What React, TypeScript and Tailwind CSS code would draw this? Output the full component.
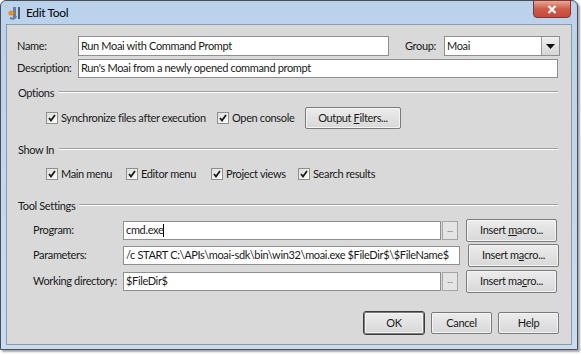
import React from "react";

const font = { fontFamily: 'Lato, "Liberation Sans", sans-serif' };

function Check() {
  return (
    <span className="w-[12px] h-[12px] border border-[#8e8f8f] bg-gradient-to-br from-[#dcdcdc] to-[#ffffff] flex items-center justify-center shrink-0">
      <svg width="8" height="8" viewBox="0 0 8 8">
        <path d="M1 4 L3 6.5 L7 1" stroke="#1a1a1a" strokeWidth="1.8" fill="none" />
      </svg>
    </span>
  );
}

function CheckItem({ label, w }: { label: string; w: string }) {
  return (
    <div className={`flex items-center gap-[3px] ${w}`}>
      <Check />
      <span>{label}</span>
    </div>
  );
}

function Btn({ children, w, h = "h-[22px]" }: { children: React.ReactNode; w: string; h?: string }) {
  return (
    <div
      className={`${w} ${h} border border-[#7b7b7b] rounded-[2px] bg-gradient-to-b from-[#ececec] to-[#d8d8d8] shadow-[inset_0_0_0_1px_#f4f4f4] flex items-center justify-center text-[#1a1a1a]`}
    >
      {children}
    </div>
  );
}

function Heading({ label, lineStart }: { label: string; lineStart: string }) {
  return (
    <div className="flex items-center h-[16px] pl-[11px] pr-[13px]">
      <span className={`${lineStart} shrink-0`}>{label}</span>
      <div className="flex-1 h-[2px] border-t border-[#a0a0a0] border-b border-b-white mt-[-2px]" />
    </div>
  );
}

function Dots() {
  return (
    <div className="w-[16px] h-[19px] border border-[#a5a5a5] bg-[#e4e4e4] flex items-center justify-center text-[8px] text-[#555] ml-[1px] leading-none pb-[3px] tracking-normal">
      ...
    </div>
  );
}

export default function App() {
  return (
    <div className="w-[581px] h-[355px] bg-white relative overflow-hidden text-[11px] tracking-[-0.35px] text-[#1a1a1a] whitespace-nowrap" style={font}>
      <div className="w-[578px] h-[350px] border border-[#4b4f55] rounded-t-[6px] bg-gradient-to-b from-[#bad2ec] to-[#c9dcf1] flex flex-col shadow-[2px_2px_2px_rgba(0,0,0,0.35)]">
        {/* title bar */}
        <div className="h-[23px] flex items-center relative shrink-0">
          <svg width="16" height="16" viewBox="0 0 16 16" className="ml-[5px]">
            <rect x="7" y="2" width="3" height="11" fill="#6b7f99" />
            <path d="M4 13 Q9 15 10 11" stroke="#6b7f99" strokeWidth="2" fill="none" />
            <rect x="12" y="2" width="2" height="12" fill="#4b5d78" />
            <circle cx="5" cy="8" r="2.6" fill="#f28c1a" />
          </svg>
          <span className="ml-[4px] text-[12px] text-black">Edit Tool</span>
          <div className="absolute right-[6px] top-[-1px] w-[38px] h-[18px] rounded-b-[4px] border border-[#7a3a33] bg-gradient-to-b from-[#e8a797] via-[#cf5b48] to-[#c9473a] flex items-center justify-center">
            <svg width="10" height="9" viewBox="0 0 10 9">
              <path d="M1.5 1 L8.5 8 M8.5 1 L1.5 8" stroke="white" strokeWidth="2.2" />
            </svg>
          </div>
        </div>
        {/* content */}
        <div className="mx-[5px] h-[321px] border border-[#8b99a8] bg-[#d9d9d9] flex flex-col shrink-0">
          {/* name row */}
          <div className="flex items-center h-[20px] mt-[11px] pl-[10px]">
            <span className="w-[61px]">Name:</span>
            <div className="w-[311px] h-[20px] border border-[#8f8f8f] bg-white flex items-center pl-[2px]">Run Moai with Command Prompt</div>
            <span className="ml-[16px] w-[39px]">Group:</span>
            <div className="flex h-[20px] border border-[#8f8f8f] bg-white">
              <div className="w-[96px] flex items-center pl-[2px]">Moai</div>
              <div className="w-[18px] border-l border-[#9a9a9a] bg-gradient-to-b from-[#f0f0f0] to-[#d6d6d6] flex items-center justify-center">
                <svg width="9" height="5" viewBox="0 0 9 5"><path d="M0 0 H9 L4.5 5 Z" fill="#111" /></svg>
              </div>
            </div>
          </div>
          {/* description */}
          <div className="flex items-center h-[19px] mt-[3px] pl-[10px]">
            <span className="w-[61px]">Description:</span>
            <div className="w-[480px] h-[19px] border border-[#8f8f8f] bg-white flex items-center pl-[2px]">Run's Moai from a newly opened command prompt</div>
          </div>
          {/* options */}
          <div className="mt-[7px]"><Heading label="Options" lineStart="w-[41px]" /></div>
          <div className="flex items-center h-[22px] mt-[6px] pl-[39px]">
            <CheckItem label="Synchronize files after execution" w="w-[171px]" />
            <CheckItem label="Open console" w="w-[88px]" />
            <Btn w="w-[96px]">
              <span>Output <span className="underline">F</span>ilters...</span>
            </Btn>
          </div>
          {/* show in */}
          <div className="mt-[13px]"><Heading label="Show In" lineStart="w-[41px]" /></div>
          <div className="flex items-center h-[16px] mt-[8px] pl-[39px]">
            <CheckItem label="Main menu" w="w-[80px]" />
            <CheckItem label="Editor menu" w="w-[85px]" />
            <CheckItem label="Project views" w="w-[87px]" />
            <CheckItem label="Search results" w="w-[100px]" />
          </div>
          {/* tool settings */}
          <div className="mt-[16px]"><Heading label="Tool Settings" lineStart="w-[61px]" /></div>
          {[
            { label: "Program:", value: "cmd.exe", dots: true, m: "mt-[5px]", mac: <>Insert <span className="underline">m</span>acro...</>, cursor: true },
            { label: "Parameters:", value: "/c START C:\\APIs\\moai-sdk\\bin\\win32\\moai.exe $FileDir$\\$FileName$", dots: false, m: "mt-[3px]", mac: <>Insert m<span className="underline">a</span>cro...</>, cursor: false },
            { label: "Working directory:", value: "$FileDir$", dots: true, m: "mt-[4px]", mac: <>Insert ma<span className="underline">c</span>ro...</>, cursor: false },
          ].map((r) => (
            <div key={r.label} className={`flex items-center h-[22px] ${r.m} pl-[26px]`}>
              <span className="w-[90px]">{r.label}</span>
              {r.dots ? (
                <>
                  <div className="w-[318px] h-[19px] border border-[#8f8f8f] bg-white flex items-center pl-[2px]">
                    {r.value}
                    {r.cursor && <span className="inline-block w-[1px] h-[13px] bg-black" />}
                  </div>
                  <Dots />
                </>
              ) : (
                <div className="w-[337px] h-[19px] border border-[#8f8f8f] bg-white flex items-center pl-[2px] overflow-hidden">{r.value}</div>
              )}
              <div className="ml-[8px]">
                <Btn w="w-[91px]" h="h-[23px]"><span>{r.mac}</span></Btn>
              </div>
            </div>
          ))}
          {/* bottom buttons */}
          <div className="flex justify-end gap-[6px] mt-[19px] pr-[12px]">
            <div className="border border-[#3c3c3c] rounded-[3px]"><Btn w="w-[60px]" h="h-[22px]">OK</Btn></div>
            <div className="mt-[1px]"><Btn w="w-[61px]">Cancel</Btn></div>
            <div className="mt-[1px]"><Btn w="w-[61px]">Help</Btn></div>
          </div>
        </div>
      </div>
    </div>
  );
}
